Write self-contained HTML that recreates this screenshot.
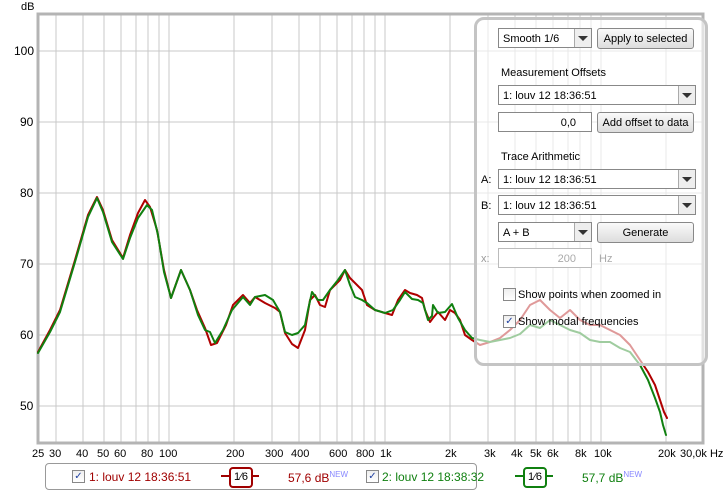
<!DOCTYPE html>
<html><head><meta charset="utf-8"><style>
body{margin:0;width:723px;height:491px;background:#fff;font-family:"Liberation Sans",Arial,sans-serif;position:relative;overflow:hidden}
.a{position:absolute;font-size:11px;color:#000;white-space:nowrap}
.panel{position:absolute;left:474px;top:17px;width:228px;height:343px;border:3px solid #c4c4c4;border-radius:10px;background:rgba(255,255,255,0.6)}
.sel{position:absolute;height:20px;border:1px solid #888;background:#fff;font-size:11px;line-height:20px;padding-left:4px;box-sizing:border-box}
.sel .dd{position:absolute;right:0;top:0;width:16px;height:18px;border-left:1px solid #aaa;background:#eee}
.sel .dd:after{content:"";position:absolute;left:3px;top:7px;border:5px solid transparent;border-top:5px solid #333}
.btn{position:absolute;height:21px;border:1px solid #888;border-radius:3px;background:linear-gradient(#fafafa,#ddd);font-size:11px;line-height:20px;text-align:center;box-sizing:border-box}
.cb{position:absolute;width:11px;height:11px;border:1px solid #888;background:linear-gradient(#eee,#fff);font-size:10px;line-height:11px;color:#2040a0;text-align:center}
</style></head><body>
<svg width="723" height="491" style="position:absolute;left:0;top:0">
<g stroke="#c8c8c8" stroke-width="1">
<line x1="39" y1="51" x2="703" y2="51"/><line x1="39" y1="122" x2="703" y2="122"/><line x1="39" y1="193" x2="703" y2="193"/><line x1="39" y1="264" x2="703" y2="264"/><line x1="39" y1="335" x2="703" y2="335"/><line x1="39" y1="406" x2="703" y2="406"/>
<line x1="56" y1="14" x2="56" y2="443"/><line x1="83" y1="14" x2="83" y2="443"/><line x1="104" y1="14" x2="104" y2="443"/><line x1="121" y1="14" x2="121" y2="443"/><line x1="136" y1="14" x2="136" y2="443"/><line x1="148" y1="14" x2="148" y2="443"/><line x1="159" y1="14" x2="159" y2="443"/><line x1="169" y1="14" x2="169" y2="443"/>
<line x1="234" y1="14" x2="234" y2="443"/><line x1="272" y1="14" x2="272" y2="443"/><line x1="299" y1="14" x2="299" y2="443"/><line x1="320" y1="14" x2="320" y2="443"/><line x1="337" y1="14" x2="337" y2="443"/><line x1="352" y1="14" x2="352" y2="443"/><line x1="364" y1="14" x2="364" y2="443"/><line x1="375" y1="14" x2="375" y2="443"/><line x1="385" y1="14" x2="385" y2="443"/>
<line x1="450" y1="14" x2="450" y2="443"/><line x1="488" y1="14" x2="488" y2="443"/><line x1="515" y1="14" x2="515" y2="443"/><line x1="536" y1="14" x2="536" y2="443"/><line x1="553" y1="14" x2="553" y2="443"/><line x1="568" y1="14" x2="568" y2="443"/><line x1="580" y1="14" x2="580" y2="443"/><line x1="591" y1="14" x2="591" y2="443"/><line x1="601" y1="14" x2="601" y2="443"/><line x1="666" y1="14" x2="666" y2="443"/>
</g>
<path d="M38,14 H703 V443 H38 Z" fill="none" stroke="#b4b4b4" stroke-width="3"/>
<g fill="none" stroke-width="2" stroke-linejoin="round" stroke-linecap="round">
<path stroke="#b00000" d="M38,352 L50,330 60,310 75,260 88,215 97,197 103,210 112,240 123,258 130,235 138,213 145,200 150,207 157,230 164,270 171,298 181,270 190,290 197,310 205,328 211,345 217,343 226,325 233,305 243,295 250,303 255,297 265,303 275,308 280,312 285,333 292,344 298,348 305,330 310,300 315,295 320,305 325,307 330,290 340,280 345,270 350,278 357,285 362,290 367,305 375,310 385,313 392,315 398,300 405,290 410,293 417,295 422,298 425,310 430,322 433,318 438,312 445,320 450,310 455,313 460,320 465,335 472,340 480,345 490,342 500,338 510,330 520,320 530,305 540,300 550,310 560,318 570,310 580,320 590,325 600,325 610,330 620,335 630,345 640,360 648,372 655,385 660,400 664,412 667,418"/>
<path stroke="#108010" d="M38,353 L50,332 60,312 75,262 88,217 97,198 103,212 112,242 123,259 130,238 138,218 147,205 152,210 158,235 164,272 171,298 181,270 190,290 198,315 205,330 210,332 215,343 223,330 232,310 243,297 250,305 255,297 265,295 273,300 280,312 285,332 292,335 298,333 305,325 308,310 312,292 318,300 323,300 330,290 338,280 345,270 350,285 355,297 362,300 367,303 375,310 385,313 393,310 400,300 405,292 412,299 418,300 423,303 428,320 432,316 433,305 438,313 445,312 452,304 458,318 465,330 472,338 480,340 490,342 500,340 510,338 520,334 530,325 540,328 550,320 560,325 570,330 580,333 590,340 600,342 610,342 620,348 630,352 640,365 648,380 655,398 660,412 663,425 666,435"/>
</g>
</svg>
<div class="a" style="left:21px;top:1px">dB</div>
<div class="a" style="left:14px;top:44px;font-size:12px">100</div>
<div class="a" style="left:20px;top:115px;font-size:12px">90</div>
<div class="a" style="left:20px;top:186px;font-size:12px">80</div>
<div class="a" style="left:20px;top:257px;font-size:12px">70</div>
<div class="a" style="left:20px;top:328px;font-size:12px">60</div>
<div class="a" style="left:20px;top:399px;font-size:12px">50</div>
<div class="a" style="top:448px;left:0;width:723px;height:14px">
<span class="a" style="left:32px">25</span><span class="a" style="left:49px">30</span><span class="a" style="left:76px">40</span><span class="a" style="left:97px">50</span><span class="a" style="left:114px">60</span><span class="a" style="left:141px">80</span><span class="a" style="left:159px">100</span><span class="a" style="left:226px">200</span><span class="a" style="left:265px">300</span><span class="a" style="left:291px">400</span><span class="a" style="left:329px">600</span><span class="a" style="left:356px">800</span><span class="a" style="left:380px">1k</span><span class="a" style="left:445px">2k</span><span class="a" style="left:484px">3k</span><span class="a" style="left:511px">4k</span><span class="a" style="left:530px">5k</span><span class="a" style="left:547px">6k</span><span class="a" style="left:575px">8k</span><span class="a" style="left:594px">10k</span><span class="a" style="left:658px">20k</span><span class="a" style="left:680px">30,0k Hz</span>
</div>
<div class="panel"></div>
<div class="sel" style="left:498px;top:28px;width:94px">Smooth 1/6<span class="dd"></span></div>
<div class="btn" style="left:597px;top:28px;width:97px">Apply to selected</div>
<div class="a" style="left:501px;top:67px">Measurement Offsets</div>
<div class="sel" style="left:498px;top:85px;width:198px">1: louv 12 18:36:51<span class="dd"></span></div>
<div class="sel" style="left:498px;top:112px;width:94px;text-align:right;padding-right:15px">0,0</div>
<div class="btn" style="left:597px;top:112px;width:97px">Add offset to data</div>
<div class="a" style="left:501px;top:151px">Trace Arithmetic</div>
<div class="a" style="left:481px;top:174px">A:</div>
<div class="sel" style="left:498px;top:169px;width:198px">1: louv 12 18:36:51<span class="dd"></span></div>
<div class="a" style="left:481px;top:200px">B:</div>
<div class="sel" style="left:498px;top:195px;width:198px">1: louv 12 18:36:51<span class="dd"></span></div>
<div class="sel" style="left:498px;top:222px;width:94px">A + B<span class="dd"></span></div>
<div class="btn" style="left:597px;top:222px;width:97px">Generate</div>
<div class="a" style="left:481px;top:253px;color:#999">x:</div>
<div class="sel" style="left:498px;top:248px;width:94px;text-align:right;padding-right:15px;color:#aaa;border-color:#bbb">200</div>
<div class="a" style="left:599px;top:253px;color:#aaa">Hz</div>
<div class="cb" style="left:503px;top:288px"></div>
<div class="a" style="left:518px;top:289px">Show points when zoomed in</div>
<div class="cb" style="left:503px;top:315px">✓</div>
<div class="a" style="left:518px;top:316px">Show modal frequencies</div>
<div style="position:absolute;left:45px;top:463px;width:430px;height:25px;border:1px solid #999;border-radius:4px;background:#fff"></div>
<div class="cb" style="left:72px;top:470px">✓</div>
<div class="a" style="left:89px;top:470px;color:#a00000;font-size:12px">1: louv 12 18:36:51</div>
<div style="position:absolute;left:221px;top:475px;width:38px;height:2px;background:#a00000"></div>
<div style="position:absolute;left:229px;top:467px;width:20px;height:17px;border:2px solid #a00000;border-radius:4px;background:#fff;font-size:11px;line-height:17px;text-align:center">1⁄6</div>
<div class="a" style="left:288px;top:470px;color:#a00000;font-size:12px">57,6 dB<sup style="font-size:8px;color:#88f">NEW</sup></div>
<div class="cb" style="left:366px;top:470px">✓</div>
<div class="a" style="left:382px;top:470px;color:#108010;font-size:12px">2: louv 12 18:38:32</div>
<div style="position:absolute;left:515px;top:475px;width:38px;height:2px;background:#108010"></div>
<div style="position:absolute;left:523px;top:467px;width:20px;height:17px;border:2px solid #108010;border-radius:4px;background:#fff;font-size:11px;line-height:17px;text-align:center">1⁄6</div>
<div class="a" style="left:582px;top:470px;color:#108010;font-size:12px">57,7 dB<sup style="font-size:8px;color:#88f">NEW</sup></div>
</body></html>
